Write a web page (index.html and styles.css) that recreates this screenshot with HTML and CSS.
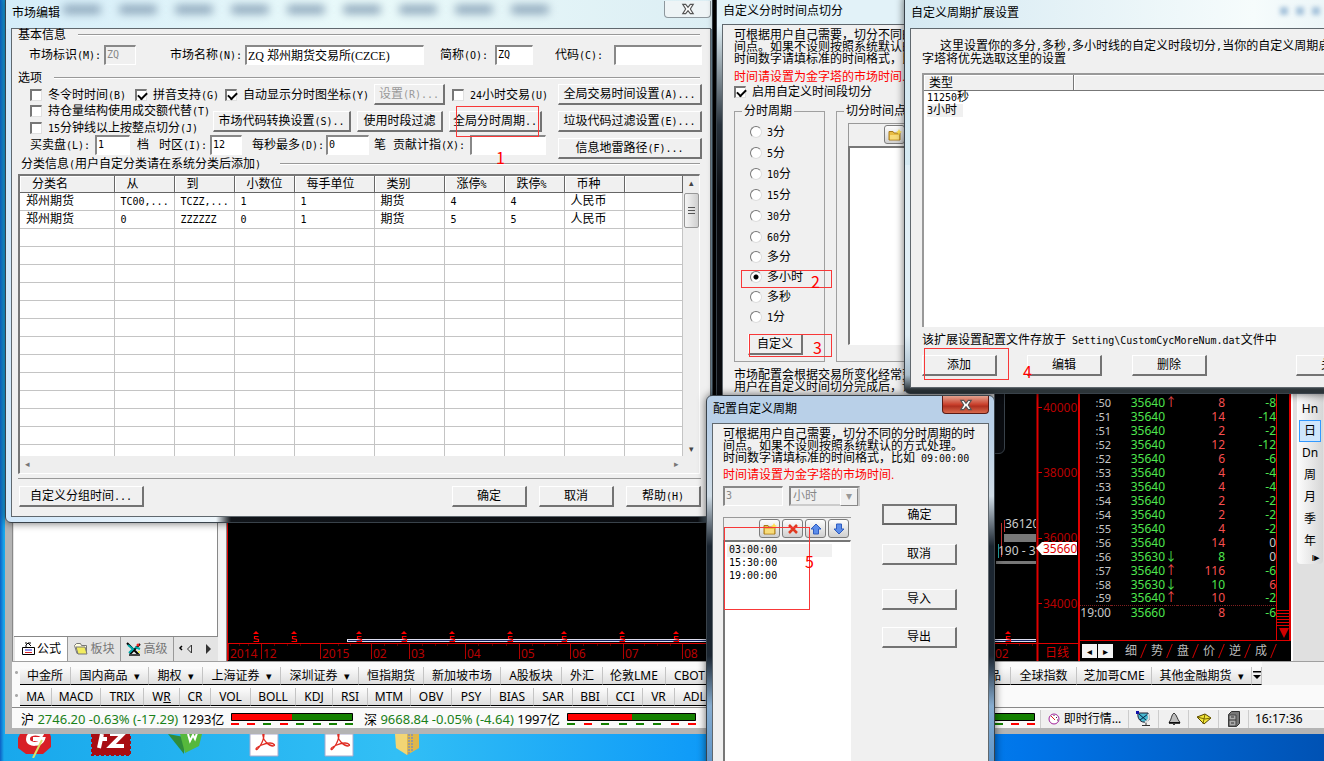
FILE: index.html
```html
<!DOCTYPE html>
<html lang="zh-CN">
<head>
<meta charset="utf-8">
<title>市场编辑</title>
<link rel="stylesheet" href="styles.css">
</head>
<body>
<svg class="defs" width="0" height="0" aria-hidden="true">
  <defs>
    <symbol id="folder" viewBox="0 0 14 12"><path d="M1 2.500h4l1 1.500h6v7H1z" fill="#e9bd45" stroke="#a87a1c"/><path d="M2 6h9v4.500H2z" fill="#f8dc7a"/><path d="M11 0l1 2 2 1-2 1-1 2-1-2-2-1 2-1z" fill="#ffe14d"/></symbol>
    <symbol id="cross" viewBox="0 0 12 12"><path d="M2 2l8 8M10 2l-8 8" stroke="#e03a20" stroke-width="2.500"/></symbol>
    <symbol id="up" viewBox="0 0 12 12"><path d="M6 1l5 5H8.500v5h-5V6H1z" fill="#5c8dea" stroke="#2f5cc0"/></symbol>
    <symbol id="down" viewBox="0 0 12 12"><path d="M6 11l5-5H8.500V1h-5v5H1z" fill="#5c8dea" stroke="#2f5cc0"/></symbol>
    <symbol id="bill" viewBox="0 0 8 12"><path d="M4 0l3 3H1z" fill="#f00"/><path d="M6.500 5.500h-4v2l4 1v2h-5" fill="none" stroke="#f00" stroke-width="1.200"/></symbol>
    <symbol id="pdf" viewBox="0 0 30 24"><path d="M1 0h28v22H1z" fill="#fff" stroke="#aac"/><path d="M14 0c-1 6 6 12 10 12 3 0 1-3-3-3-5 0-14 4-14 6 0 3 8-6 8-15" fill="none" stroke="#e02a20" stroke-width="1.300"/></symbol>
    <symbol id="xmark" viewBox="0 0 12 10"><path d="M1.500 1h2.500l2 2.500L8 1h2.500L8 5l2.500 4H8L6 6.500 4 9H1.500L4 5z" fill="#fff" stroke="#555"/></symbol>
  </defs>
</svg>

<main class="desktop">
  <div class="shortcuts" aria-hidden="true">
    <svg class="s1" width="36" height="24"><path d="M3 0h30l1 3v10l-8 7H9l-8-6V4z" fill="#d81f26"/><path d="M26 2c-6-4-15-3-15 3 0 7 13 6 15 0H16" fill="none" stroke="#fff" stroke-width="4"/><path d="M16 24l9-18" stroke="#d9e36a" stroke-width="2"/></svg>
    <svg class="s2" width="40" height="24"><path d="M1 0h38v21H1z" fill="#a80d12" stroke="#a80d12" stroke-width="2" stroke-dasharray="3 2"/><path d="M8 14L11 0M10 5h6M19 0h13L20 12h13" fill="none" stroke="#fff" stroke-width="4"/></svg>
    <svg class="s3" width="36" height="22"><path d="M0 0l16 3v17z" fill="#2f8c3b"/><path d="M12 0h22l-3 12-14 7z" fill="#56b83c"/><path d="M20 0l2 7 3-6 2 4 2-6" fill="none" stroke="#fff" stroke-width="2"/></svg>
    <svg class="s4" width="30" height="24"><use href="#pdf"/></svg>
    <svg class="s5" width="30" height="24"><use href="#pdf"/></svg>
    <svg class="s6" width="28" height="24"><path d="M1 0h12v21L2 14z" fill="#f2d574"/><path d="M13 0h12v14l-12 7z" fill="#dfb74a"/><path d="M15 0v20M18 0v18" stroke="#999" stroke-width="2" stroke-dasharray="2 1"/></svg>
  </div>

  <section class="app" aria-label="行情主窗口">
    <div class="work">
      <div class="side">
        <div class="side-list"></div>
        <nav class="side-tabs">
          <button class="on"><svg width="15" height="14"><path d="M1.500 5.500h12v7h-12zM5 5V3l2-2h3M7 1l3 3M4 1h2" fill="#fff" stroke="#000"/><path d="M4 8h7" stroke="#22c"/><path d="M4 10.500h7" stroke="#d22"/></svg>公式</button>
          <button><svg width="16" height="14"><path d="M1.500 3.500l2-2h4l1 2h5v8H4z" fill="#fffde0" stroke="#777"/><path d="M3 5h9l2 7H5z" fill="#f2ec60" stroke="#777"/></svg>板块</button>
          <button><svg width="16" height="15"><path d="M1 1l12 12M14 2L4 12" stroke="#000" stroke-width="2"/><path d="M2 3l5 4-4 4M9 5l5 2" stroke="#0aa" fill="none" stroke-width="2"/><path d="M3 13h11" stroke="#444" stroke-width="2"/><circle cx="12" cy="3" r="1.500" fill="#e22"/><circle cx="13" cy="10" r="1" fill="#ee2"/></svg>高级</button>
          <span class="side-arrows"><svg width="34" height="10"><path d="M4 2L2 4l2 2" stroke="#000" fill="none" stroke-width="1.500"/><path d="M13.500 1v8l-4-4z" fill="none" stroke="#333"/><path d="M28 0v10l5-5z" fill="#333"/></svg></span>
        </nav>
      </div>
      <div class="chart">
        <svg width="852" height="272" viewBox="226 390 852 272">
          <g fill="none" stroke="#e00000">
            <path d="M227 390v272M1037.500 390v272" stroke-width="2"/>
            <path d="M226 644.500h852"/>
            <path d="M1037 408.500h5M1037 473.500h5M1037 539.500h5M1037 604.500h5"/>
            <path stroke="#b00000" d="M228.500 645v16M261.500 645v15M320.500 645v15M371.500 645v15M409.500 645v15M465.500 645v15M519.500 645v15M570.500 645v15M623.500 645v15M682.500 645v15M239 646h1M248 646h1M274 646h1M287 646h1M300 646h1M338 646h1M350 646h1M384 646h1M397 646h1M422 646h1M435 646h1M447 646h1M478 646h1M492 646h1M506 646h1M532 646h1M544 646h1M557 646h1M583 646h1M597 646h1M610 646h1M644 646h1M657 646h1M670 646h1M1006 646h1M1019 646h1M1032 646h1"/>
          </g>
          <path d="M347 641.500h689" stroke="#dde" stroke-width="3"/><path d="M348 641.500h688" stroke="#102060"/>
          <g>
            <use href="#bill" x="252" y="632" width="8" height="12"/><use href="#bill" x="290" y="632" width="8" height="12"/><use href="#bill" x="355" y="632" width="8" height="12"/><use href="#bill" x="400" y="632" width="8" height="12"/><use href="#bill" x="448" y="632" width="8" height="12"/><use href="#bill" x="506" y="632" width="8" height="12"/><use href="#bill" x="560" y="632" width="8" height="12"/><use href="#bill" x="618" y="632" width="8" height="12"/><use href="#bill" x="672" y="632" width="8" height="12"/><use href="#bill" x="1004" y="632" width="8" height="12"/>
          </g>
          <g class="axis">
            <text x="230" y="659">2014</text><text x="263" y="659">12</text><text x="322" y="659">2015</text><text x="373" y="659">02</text><text x="411" y="659">03</text><text x="467" y="659">04</text><text x="521" y="659">05</text><text x="572" y="659">06</text><text x="625" y="659">07</text><text x="684" y="659">08</text><text x="995" y="659">02</text>
            <text x="1043" y="413">40000</text><text x="1043" y="478">38000</text><text x="1043" y="543">36000</text><text x="1043" y="609">34000</text>
          </g>
          <text class="day" x="1045" y="658">日线</text>
          <path d="M1036 549l6-6h35v13h-35z" fill="#fff"/><text class="last" x="1043" y="554">35660</text>
          <path d="M1004 535h32v8h-32z" fill="#777"/><path d="M996 562h40v3h-40z" fill="#777"/>
          <path d="M1001.500 524v34M1004.500 521v12" stroke="#c03030"/><path d="M998.500 545v14" stroke="#2aa"/>
          <svg x="990" y="515" width="46" height="45" viewBox="990 515 46 45"><text class="tip" x="1005" y="529">36120</text><text class="tip" x="998" y="556">190 - 3</text></svg>
        </svg>
      </div>
      <div class="ticks">
        <div class="tick-main">
          <table>
            <tr><td>:50<td class="g">35640<td class="r">↑<td class="r">8<td class="g">-8
            <tr><td>:51<td class="g">35640<td><td class="r">14<td class="g">-14
            <tr><td>:51<td class="g">35640<td><td class="r">2<td class="g">-2
            <tr><td>:52<td class="g">35640<td><td class="r">12<td class="g">-12
            <tr><td>:52<td class="g">35640<td><td class="r">6<td class="g">-6
            <tr><td>:53<td class="g">35640<td><td class="r">4<td class="g">-4
            <tr><td>:53<td class="g">35640<td><td class="r">4<td class="g">-4
            <tr><td>:54<td class="g">35640<td><td class="r">2<td class="g">-2
            <tr><td>:54<td class="g">35640<td><td class="r">2<td class="g">-2
            <tr><td>:55<td class="g">35640<td><td class="r">4<td class="g">-2
            <tr><td>:56<td class="g">35640<td><td class="r">14<td>0
            <tr><td>:56<td class="g">35630<td class="g">↓<td class="g">8<td>0
            <tr><td>:57<td class="g">35640<td class="r">↑<td class="r">116<td class="g">-6
            <tr><td>:58<td class="g">35630<td class="g">↓<td class="g">10<td class="r">6
            <tr><td>:59<td class="g">35640<td class="r">↑<td class="r">10<td class="g">-2
            <tr class="now"><td>19:00<td class="g">35660<td><td class="r">8<td class="g">-6
          </table>
          <div class="tick-scroll"><svg width="14" height="30"><path d="M0 .5h15M0 3.500h15M0 6.500h15M0 9.500h15M0 12.500h15M0 15.500h15" stroke="#e00000"/><path d="M2 18h10l-5 10z" fill="#d00000"/></svg></div>
        </div>
        <nav class="tick-tabs">
          <button class="step" aria-label="上一页">◂</button><button class="step" aria-label="下一页">▸</button>
          <a href="#">细</a><a href="#">势</a><a href="#">盘</a><a href="#">价</a><a href="#">逆</a><a href="#">成</a>
        </nav>
      </div>
      <nav class="periods">
        <div>
          <button>Hn</button><button class="on">日</button><button>Dn</button><button>周</button><button>月</button><button>季</button><button>年</button>
          <span>ı▸</span>
        </div>
      </nav>
    </div>
    <nav class="bar markets">
      <button>中金所</button><button>国内商品<b>▾</b></button><button>期权<b>▾</b></button><button>上海证券<b>▾</b></button><button>深圳证券<b>▾</b></button><button>恒指期货</button><button>新加坡市场</button><button>A股板块</button><button>外汇</button><button>伦敦LME</button><button>CBOT</button><button class="end">商品</button><button>全球指数</button><button>芝加哥CME</button><button>其他金融期货<b>▾</b></button><button class="more" aria-label="更多"><svg width="8" height="10"><path d="M0 1h8v1.500H0zM0 5h8L4 9z"/></svg></button>
    </nav>
    <nav class="bar indicators">
      <button>MA</button><button>MACD</button><button>TRIX</button><button>W<u>R</u></button><button>CR</button><button>VOL</button><button>BOLL</button><button>KDJ</button><button>RSI</button><button>MTM</button><button>OBV</button><button>PSY</button><button>BIAS</button><button>SAR</button><button>BBI</button><button>CCI</button><button>VR</button><button>ADL</button>
    </nav>
    <footer class="status">
      <span>沪 <em>2746.20 -0.63% (-17.29)</em> 1293亿</span>
      <svg class="meter" width="122" height="13"><path d="M.5.5h121v7H.5z" fill="#138000" stroke="#000"/><path d="M1 1h60v6H1z" fill="#f00"/><path d="M0 11h8M16 11h8M49 11h8" stroke="#f00" stroke-width="2"/><path d="M32 11h8M65 11h8M82 11h8M98 11h8M114 11h8" stroke="#138000" stroke-width="2"/></svg>
      <span>深 <em>9668.84 -0.05% (-4.64)</em> 1997亿</span>
      <svg class="meter" width="129" height="13"><path d="M.5.5h128v7H.5z" fill="#138000" stroke="#000"/><path d="M1 1h64v6H1z" fill="#f00"/><path d="M17 11h8M104 11h8M121 11h8" stroke="#f00" stroke-width="2"/><path d="M0 11h8M34 11h8M52 11h8M69 11h8M86 11h8" stroke="#138000" stroke-width="2"/></svg>
      <svg class="meter last-meter" width="60" height="13"><path d="M.5.5h59v7H.5z" fill="#138000" stroke="#000"/><path d="M20 11h8" stroke="#138000" stroke-width="2"/><path d="M36 11h8M52 11h8" stroke="#f00" stroke-width="2"/></svg>
      <span class="cell live"><svg width="12" height="12"><circle cx="6" cy="6" r="5" fill="#fff" stroke="#a0209a"/><path d="M3 3l4 4" stroke="#d22" fill="none"/><path d="M6 2v1M9 4L8 5M10 7H9" stroke="#333"/></svg>即时行情…</span>
      <span class="cell"><svg width="16" height="16"><path d="M2 2c-1 6 3 10 8 9 4-1 4-5 2-9z" fill="#48b8d0" stroke="#223"/><path d="M3 3l8 7M12 3L4 9" stroke="#024"/><path d="M12 3c2 3 1 7-3 8" stroke="#ddd" fill="none" stroke-width="2"/><path d="M6 14.500h8M10 12v2" stroke="#333"/><path d="M0 0h3v3H0z" fill="#11a"/></svg></span>
      <span class="cell"><svg width="14" height="14"><path d="M7 1c-3 2-2 6-5 9.500h11C10 7 10 3 7 1z" fill="#bbb" stroke="#333"/><path d="M2 11h11M7 12v1" stroke="#000" stroke-width="1.500"/></svg></span>
      <span class="cell"><svg width="16" height="14"><path d="M1 5l8-3 6 4-7 6z" fill="#f2e63a" stroke="#554400"/><path d="M1 5l8 2 6-1M9 2L7 12" fill="none" stroke="#7a6a00"/></svg></span>
      <span class="cell"><svg width="14" height="16"><path d="M1.500 3.500l3-3h8v12l-3 3h-8z" fill="#777" stroke="#333"/><path d="M2 4h7v11H2z" fill="#aaa" stroke="#444"/><path d="M2 9h7M4 6h3M4 12h3" stroke="#333"/></svg></span>
      <span class="cell clock">16:17:36</span>
    </footer>
  </section>

  <section class="win market">
    <header><h1>市场编辑</h1>
      <div class="haze" aria-hidden="true"><i></i><i></i><i></i><i></i><i></i><i></i><i></i><i></i><i></i></div>
      <button class="x" aria-label="关闭"><svg width="14" height="12"><use href="#xmark"/></svg></button></header>
    <form class="client">
      <h2 class="rule">基本信息</h2>
      <div class="row names">
        <label for="mid">市场标识<small>(M):</small></label><input id="mid" class="w32" value="ZQ" disabled>
        <label for="mname">市场名称<small>(N):</small></label><input id="mname" class="w179" value="ZQ 郑州期货交易所(CZCE)">
        <label for="mshort">简称<small>(O):</small></label><input id="mshort" class="w38" value="ZQ">
        <label for="mcode">代码<small>(C):</small></label><input id="mcode" class="w88">
      </div>
      <h2 class="rule opt">选项</h2>
      <div class="options">
        <div class="opt-left">
          <div class="row checks">
            <label><input type="checkbox"><span>冬令时时间<small>(B)</small></span></label>
            <label><input type="checkbox" checked><span>拼音支持<small>(G)</small></span></label>
            <label><input type="checkbox" checked><span>自动显示分时图坐标<small>(Y)</small></span></label>
            <button type="button" class="btn w71" disabled>设置<small>(R)...</small></button>
            <label><input type="checkbox"><span><small>24</small>小时交易<small>(U)</small></span></label>
          </div>
          <div class="row mid">
            <div class="stack">
              <label><input type="checkbox"><span>持仓量结构使用成交额代替<small>(T)</small></span></label>
              <label><input type="checkbox"><span><small>15</small>分钟线以上按整点切分<small>(J)</small></span></label>
            </div>
            <button type="button" class="btn w138">市场代码转换设置<small>(S)..</small></button>
            <button type="button" class="btn w86">使用时段过滤</button>
            <button type="button" class="btn w93">全局分时周期<small>..</small></button>
          </div>
          <div class="row limits">
            <label for="lv">买卖盘<small>(L):</small></label><input id="lv" class="w35" value="1"><span>档</span>
            <label for="tz">时区<small>(I):</small></label><input id="tz" class="w32" value="12">
            <label for="ps">每秒最多<small>(D):</small></label><input id="ps" class="w43" value="0"><span>笔</span>
            <label for="cx">贡献计指<small>(X):</small></label><input id="cx" class="w76">
          </div>
        </div>
        <div class="opt-right">
          <button type="button" class="btn">全局交易时间设置<small>(A)...</small></button>
          <button type="button" class="btn">垃圾代码过滤设置<small>(E)...</small></button>
          <button type="button" class="btn">信息地雷路径<small>(F)...</small></button>
        </div>
      </div>
      <h2 class="rule cat">分类信息<small>(</small>用户自定分类请在系统分类后添加<small>)</small></h2>
      <div class="grid">
        <div class="grid-body">
          <table>
            <colgroup><col class="c95"><col class="c60"><col class="c60"><col class="c60"><col class="c80"><col class="c70"><col class="c60"><col class="c60"><col class="c60"><col></colgroup>
            <thead><tr><th>分类名<th>从<th>到<th>小数位<th>每手单位<th>类别<th>涨停<small>%</small><th>跌停<small>%</small><th>币种<th></thead>
            <tbody>
            <tr><td>郑州期货<td><small>TC00,...</small><td><small>TCZZ,...</small><td><small>1</small><td><small>1</small><td>期货<td><small>4</small><td><small>4</small><td>人民币<td>
            <tr><td>郑州期货<td><small>0</small><td><small>ZZZZZZ</small><td><small>0</small><td><small>1</small><td>期货<td><small>5</small><td><small>5</small><td>人民币<td>
            <tr><td><td><td><td><td><td><td><td><td><td>
            <tr><td><td><td><td><td><td><td><td><td><td>
            <tr><td><td><td><td><td><td><td><td><td><td>
            <tr><td><td><td><td><td><td><td><td><td><td>
            <tr><td><td><td><td><td><td><td><td><td><td>
            <tr><td><td><td><td><td><td><td><td><td><td>
            <tr><td><td><td><td><td><td><td><td><td><td>
            <tr><td><td><td><td><td><td><td><td><td><td>
            <tr><td><td><td><td><td><td><td><td><td><td>
            <tr><td><td><td><td><td><td><td><td><td><td>
            <tr><td><td><td><td><td><td><td><td><td><td>
            <tr><td><td><td><td><td><td><td><td><td><td>
            <tr><td><td><td><td><td><td><td><td><td><td>
            </tbody>
          </table>
        </div>
        <div class="vbar"><span>▴</span><i></i><span>▾</span></div>
        <div class="hbar"><span>◂</span><span>▸</span></div>
      </div>
      <div class="foot">
        <button type="button" class="btn w125">自定义分组时间<small>...</small></button>
        <button type="button" class="btn w75 push">确定</button>
        <button type="button" class="btn w75">取消</button>
        <button type="button" class="btn w75">帮助<small>(H)</small></button>
      </div>
    </form>
  </section>

  <section class="win split">
    <header><h1>自定义分时时间点切分</h1></header>
    <form class="client">
      <p>可根据用户自己需要，切分不同的分时周期的时<br>间点。如果不设则按照系统默认的方式处理。<br>时间数字请填标准的时间格式，比如</p>
      <p class="warn">时间请设置为金字塔的市场时间.</p>
      <label class="enable"><input type="checkbox" checked>启用自定义时间段切分</label>
      <div class="boxes">
        <fieldset class="cycle">
          <legend>分时周期</legend>
          <label><input type="radio" name="c"><span><small>3</small>分</span></label>
          <label><input type="radio" name="c"><span><small>5</small>分</span></label>
          <label><input type="radio" name="c"><span><small>10</small>分</span></label>
          <label><input type="radio" name="c"><span><small>15</small>分</span></label>
          <label><input type="radio" name="c"><span><small>30</small>分</span></label>
          <label><input type="radio" name="c"><span><small>60</small>分</span></label>
          <label><input type="radio" name="c">多分</label>
          <label><input type="radio" name="c" checked>多小时</label>
          <label><input type="radio" name="c">多秒</label>
          <label><input type="radio" name="c"><span><small>1</small>分</span></label>
          <button type="button" class="btn">自定义</button>
        </fieldset>
        <fieldset class="points">
          <legend>切分时间点</legend>
          <div class="tools"><button type="button" class="tool" aria-label="新建"><svg width="14" height="12"><use href="#folder"/></svg></button></div>
          <div class="list"></div>
        </fieldset>
      </div>
      <p class="after">市场配置会根据交易所变化经常变动<br>用户在自定义时间切分完成后，请备份</p>
    </form>
  </section>

  <section class="win extend">
    <header><h1>自定义周期扩展设置</h1><div class="dots" aria-hidden="true"><i></i><i></i><i></i></div></header>
    <form class="client">
      <p>这里设置你的多分<small>,</small>多秒<small>,</small>多小时线的自定义时段切分<small>,</small>当你的自定义周期启用时<br>字塔将优先选取这里的设置</p>
      <table>
        <thead><tr><th class="type">类型<th></thead>
        <tbody><tr><td><small>11250</small>秒<td><tr><td><mark><small>3</small>小时</mark><td></tbody>
      </table>
      <p class="path">该扩展设置配置文件存放于<small> Setting\CustomCycMoreNum.dat</small>文件中</p>
      <div class="acts">
        <button type="button" class="btn w75">添加</button><button type="button" class="btn w75">编辑</button><button type="button" class="btn w75">删除</button><button type="button" class="btn w75">关闭</button>
      </div>
    </form>
  </section>

  <section class="win config">
    <header><h1>配置自定义周期</h1><button class="x red" aria-label="关闭"><svg width="14" height="12"><use href="#xmark"/></svg></button></header>
    <form class="client">
      <p>可根据用户自己需要，切分不同的分时周期的时<br>间点。如果不设则按照系统默认的方式处理。<br>时间数字请填标准的时间格式，比如<small> 09:00:00</small></p>
      <p class="warn">时间请设置为金字塔的市场时间.</p>
      <div class="cfg">
        <div class="cfg-left">
          <div class="unit"><input value="3" aria-label="数量" disabled><div class="pick"><select aria-label="单位" disabled><option>小时</option></select></div></div>
          <div class="tools">
            <button type="button" class="tool" aria-label="新建"><svg width="14" height="12"><use href="#folder"/></svg></button>
            <button type="button" class="tool" aria-label="删除"><svg width="12" height="12"><use href="#cross"/></svg></button>
            <button type="button" class="tool" aria-label="上移"><svg width="12" height="12"><use href="#up"/></svg></button>
            <button type="button" class="tool" aria-label="下移"><svg width="12" height="12"><use href="#down"/></svg></button>
          </div>
          <ul class="list"><li class="on"><small>03:00:00</small></li><li><small>15:30:00</small></li><li><small>19:00:00</small></li></ul>
        </div>
        <div class="cfg-right">
          <button type="button" class="btn w75 main">确定</button><button type="button" class="btn w75">取消</button><button type="button" class="btn w75 import">导入</button><button type="button" class="btn w75">导出</button>
        </div>
      </div>
    </form>
  </section>

  <div class="note n1"></div><b class="num m1">1</b>
  <div class="note n2"></div><b class="num m2">2</b>
  <div class="note n3"></div><b class="num m3">3</b>
  <div class="note n4"></div><b class="num m4">4</b>
  <div class="note n5"></div><b class="num m5">5</b>
</main>
</body>
</html>
```
FILE: styles.css
```css
* { box-sizing: border-box; }
body {
  margin: 0;
  font: 12px/14px "Liberation Sans", "Noto Sans CJK SC", sans-serif;
  color: #000;
}
h1, h2, p, ul, fieldset { margin: 0; padding: 0; font-size: 12px; font-weight: 400; }
ul { list-style: none; }
button, input, select { font: inherit; color: inherit; margin: 0; padding: 0; }
small { font: 10px "DejaVu Sans Mono", monospace; white-space: pre; }
.defs { position: absolute; }

.desktop {
  position: relative;
  height: 100vh;
  overflow: hidden;
  background: linear-gradient(90deg, #0d5fc4 0, #18a8ec 4px, #32bff5 30%, #109cf8 52%, #0076ea 77%, #0052b4 100%);
}

/* desktop shortcuts */
.shortcuts svg { position: absolute; top: 734px; }
.shortcuts .s1 { left: 17px; }
.shortcuts .s2 { left: 91px; }
.shortcuts .s3 { left: 168px; }
.shortcuts .s4 { left: 249px; }
.shortcuts .s5 { left: 324px; }
.shortcuts .s6 { left: 394px; }

/* main application */
.app {
  position: absolute;
  inset: 0 0 auto 5px;
  height: 734px;
  display: flex;
  flex-direction: column;
  background: #f2f2f2;
  border: solid #b4b4b4;
  border-width: 0 0 6px 7px;
  font-family: "Noto Sans", "Noto Sans CJK SC", sans-serif;
}
.work { flex: 1; min-height: 0; display: flex; border-bottom: 1px solid #a0a0a0; }
.side { width: 206px; display: flex; flex-direction: column; border-left: 1px solid #888; background: #e4e4e4; }
.side-list { flex: 1; background: #fff; border: solid #888; border-width: 0 1px 1px 0; margin-left: 1px; }
.side-tabs { height: 24px; display: flex; align-items: center; padding-left: 2px; }
.side-tabs button { width: 53px; height: 24px; border: 0; border-right: 1px solid #999; background: none; color: #777; display: flex; align-items: center; justify-content: center; gap: 1px; font-size: 12px; white-space: nowrap; }
.side-tabs .on { background: #fff; color: #000; }
.side-arrows { padding-left: 4px; line-height: 10px; }
.chart { flex: 1; min-width: 0; margin-left: 8px; border-left: 1px solid #888; background: #000; display: flex; align-items: flex-end; justify-content: flex-end; overflow: hidden; }
.chart svg { flex: none; display: block; }
.axis { fill: #b80000; font-size: 12px; }
.day { fill: #d00000; font-size: 12px; }
.last { fill: #e00000; }
.tip { fill: #ccc; }
.ticks { width: 213px; background: #000; color: #c8c8c8; border-left: 2px solid #e00000; display: flex; flex-direction: column; }
.tick-main { flex: 1; min-height: 0; display: flex; align-items: flex-end; border-bottom: 1px solid #e00000; }
.tick-main table { width: 196px; table-layout: fixed; border-collapse: collapse; margin-bottom: 21px; }
.tick-main td { height: 14px; line-height: 13px; padding: 0; text-align: right; white-space: nowrap; }
.tick-main td:first-child { width: 31px; font-size: 11px; }
.tick-main td:nth-child(2) { width: 54px; }
.tick-main td:nth-child(3) { width: 12px; }
.tick-main td:nth-child(4) { width: 48px; }
.tick-main .g { color: #4ee64e; }
.tick-main .r { color: #f85050; }
.tick-main .now td { border-top: 1px dotted #802020; }
.tick-main .now td:first-child { font-size: 12px; }
.tick-scroll { width: 15px; margin-left: auto; align-self: stretch; border: solid #e00000; border-width: 0 2px 0 1px; display: flex; align-items: flex-end; overflow: hidden; }
.tick-tabs { height: 20px; display: flex; align-items: center; color: #bbb; padding-left: 2px; }
.tick-tabs .step { width: 15px; height: 14px; line-height: 12px; font-size: 10px; border: 0; background: #f4f4f4; color: #000; margin-right: 1px; }
.tick-tabs a { width: 26px; color: #bbb; text-decoration: none; text-align: center; position: relative; height: 14px; line-height: 14px; }
.tick-tabs a:first-of-type { margin-left: 4px; }
.tick-tabs a::after { content: ""; position: absolute; right: 0; top: 0; height: 14px; border-right: 1px solid #d00000; transform: skewX(-22deg); }
.periods { width: 33px; padding-left: 4px; background: #e0e0e0; border-left: 2px solid #fff; }
.periods div { width: 26px; padding-top: 398px; background: linear-gradient(90deg, #fdfdfd, #d6d6d6); border-radius: 0 0 4px 4px; display: flex; flex-direction: column; align-items: center; }
.periods button { width: 22px; height: 22px; border: 0; background: none; font-size: 12px; }
.periods .on { background: #cfe6fc; border: 1px solid #3399ff; }
.periods span { height: 12px; line-height: 10px; font-size: 11px; padding-left: 12px; }

.bar { display: grid; padding-left: 8px; background: radial-gradient(circle, #aaa 1px, transparent 2px) 2px 8px / 5px 5px no-repeat, #fafafa; font-size: 12px; }
.bar button { border: 0; border-right: 1px solid #c4c4c4; border-bottom: 1px solid #000; background: linear-gradient(#fcfcfc, #dedede); white-space: nowrap; overflow: hidden; height: 18px; line-height: 17px; }
.bar b { font-weight: 400; font-size: 11px; padding-left: 6px; }
.markets { height: 23px; padding-top: 5px; margin-right: 62px; grid-template-columns: 51px 78px 54px 78px 78px 65px 77px 61px 41px 63px 48px 1fr 66px 75px 100px 10px; }
.markets .end { text-align: right; padding-right: 9px; }
.indicators { height: 22px; padding-top: 3px; grid-template-columns: 32px 49px 43px 36px 31px 40px 45px 37px 35px 43px 41px 39px 43px 39px 35px 35px 32px 40px; }
.status { height: 21px; border-top: 1px solid #888; display: flex; align-items: center; padding: 2px 0 0 9px; background: #fafafa; white-space: nowrap; overflow: hidden; font-size: 13px; }
.status > span:not(.cell) { width: 210px; }
.status > span ~ span:not(.cell) { width: 203px; }
.status em { font-style: normal; color: #188018; }
.meter { margin-right: 11px; flex: none; }
.last-meter { margin: 0 5px 0 auto; }
.cell { width: 30px; height: 18px; display: flex; align-items: center; justify-content: center; border-left: 1px solid #ccc; background: #f0f0f0; font-size: 12px; }
.live { width: 88px; gap: 4px; }
.clock { width: 76px; justify-content: flex-start; padding-left: 6px; }

/* dialogs */
.win {
  position: absolute;
  display: flex;
  flex-direction: column;
  padding: 0 5px 5px;
  border: 1px solid #39424a;
  border-radius: 6px;
  background: linear-gradient(90deg, #dff1fa, #f3fbfc 50%, #c8dcea);
  box-shadow: 0 0 8px rgba(0, 0, 0, .6);
}
.win > header { display: flex; align-items: center; position: relative; }
.win h1 { flex: 1; padding: 0 0 3px 1px; white-space: nowrap; }
.client { flex: 1; min-height: 0; background: #f0f0f0; border: 1px solid #60686e; display: block; position: relative; }
.x { align-self: flex-start; width: 47px; height: 17px; border: 1px solid #8d979d; border-top: 0; border-radius: 0 0 4px 4px; background: #eef4f6; display: flex; align-items: center; justify-content: center; }
.x.red { background: linear-gradient(#e3a28f, #c9402c 50%, #b03020 60%, #d8694c); border-color: #5a1a14; height: 18px; }

.btn { height: 21px; border: solid; border-color: #fff #737373 #737373 #fff; border-width: 1px 2px 2px 1px; background: #f0f0f0; white-space: nowrap; line-height: 18px; text-align: center; }
.btn:disabled { color: #999; }
.w71 { width: 71px; } .w75 { width: 75px; } .w86 { width: 86px; } .w93 { width: 93px; } .w125 { width: 125px; } .w138 { width: 138px; }
.w32 { width: 32px; } .w35 { width: 35px; } .w38 { width: 38px; } .w43 { width: 43px; } .w76 { width: 76px; } .w88 { width: 88px; } .w179 { width: 179px; }

input:not([type]) { height: 20px; border: solid; border-width: 2px 1px 1px 2px; border-color: #888 #fff #fff #888; background: #fff; padding: 0 1px 2px; font: 10px "DejaVu Sans Mono", "Noto Sans CJK SC", monospace; }
#mname { font: 12px "Liberation Serif", "Noto Sans CJK SC", serif; }
input:not([type]):disabled { background: #f0f0f0; color: #888; }
input[type="checkbox"] { appearance: none; flex: none; width: 12px; height: 12px; border: solid; border-width: 2px 1px 1px 2px; border-color: #777 #e0e0e0 #e0e0e0 #777; background: #fff; }
input[type="checkbox"]:checked::before { content: ""; display: block; width: 7px; height: 4px; margin: 1px; border: solid #000; border-width: 0 0 2px 2px; transform: rotate(-45deg); }
input[type="radio"] { appearance: none; flex: none; width: 12px; height: 12px; border-radius: 50%; border: 1px solid; border-color: #777 #ddd #ddd #777; background: #fff; }
input[type="radio"]:checked { background: radial-gradient(circle, #000 2px, #fff 3px); }
label { white-space: nowrap; }
label:has(> input) { display: flex; align-items: center; gap: 6px; }
.warn { color: #f00; }

/* market editor */
.market { left: 5px; top: -6px; width: 708px; height: 529px; padding: 6px 1px 5px 5px; background: linear-gradient(90deg, #d5edf9, #eafafa 50%, #dceef4) top / 100% 34px no-repeat, linear-gradient(90deg, #d2e8fa 0, #eef6fb 210px, #11151a 225px, #0a0c10 98%, #6a8494); }
.market > header { height: 27px; }
.market .haze { position: absolute; left: 52px; top: 4px; display: flex; gap: 18px; }
.haze i { width: 38px; height: 9px; background: #8fa8bc; filter: blur(4px); border-radius: 4px; }
.market .client { padding-left: 6px; }
.rule { display: flex; align-items: center; height: 12px; gap: 12px; padding-right: 10px; white-space: nowrap; }
.rule::after { content: ""; flex: 1; border-top: 1px solid #999; border-bottom: 1px solid #fff; }
.row { display: grid; align-items: center; }
.names { grid-template-columns: 75px 66px 75px 195px 55px 60px 59px 88px; padding-left: 11px; margin-top: 4px; height: 20px; }
.opt { margin-top: 7px; }
.options { display: flex; padding-left: 12px; }
.opt-left { width: 528px; }
.opt-right { width: 144px; display: grid; gap: 6px; }
.checks { height: 21px; grid-template-columns: 105px 90px 149px 78px 106px; }
.row.mid { display: flex; height: 30px; align-items: flex-end; padding-bottom: 3px; gap: 6px; }
.stack { width: 177px; align-self: flex-start; margin-top: -2px; display: grid; gap: 1px; }
.stack label { height: 16px; }
.limits { height: 20px; grid-template-columns: 65px 42px 22px 51px 42px 74px 48px 19px 77px 76px; }
.cat { height: 14px; padding-left: 3px; margin-top: -2px; gap: 0; }
.cat::after { margin-left: 19px; }
.grid { display: grid; grid-template-columns: 1fr 16px; grid-template-rows: 1fr 17px; margin: 3px 10px 0 0; height: 300px; border: solid; border-width: 2px 1px 1px 2px; border-color: #777 #fff #fff #777; background: #fff; }
.grid-body { overflow: hidden; min-height: 0; }
.grid table { width: 100%; table-layout: fixed; border-collapse: collapse; }
.c60 { width: 60px; } .c70 { width: 70px; } .c80 { width: 80px; } .c95 { width: 94px; }
.grid th { height: 16px; line-height: 14px; padding: 0 0 0 12px; font-weight: 400; text-align: left; background: #f0f0f0; border-right: 1px solid #666; border-bottom: 1px solid #666; box-shadow: inset 1px 1px #fff; }
.grid td { height: 18px; line-height: 13px; padding: 0 0 0 6px; border-right: 1px solid #c4c4c4; border-bottom: 1px solid #c4c4c4; white-space: nowrap; }
.vbar { background: #eee; display: flex; flex-direction: column; align-items: center; font-size: 9px; color: #444; }
.vbar i { width: 15px; height: 35px; border: 1px solid #979797; border-radius: 2px; background: repeating-linear-gradient(#555 0 1px, transparent 1px 3px) center / 7px 8px no-repeat, linear-gradient(90deg, #f5f5f5, #cfcfcf); margin-top: 3px; }
.vbar span:last-child { margin-top: auto; }
.hbar { grid-column: 1 / 3; background: #eee; display: flex; justify-content: space-between; padding: 0 20px 0 5px; color: #777; line-height: 16px; font-size: 9px; }
.foot { display: flex; gap: 12px; margin: 4px 9px 0 0; padding: 7px 0 0 1px; border-top: 1px solid #999; }
.push { margin-left: auto; }

/* time split */
.split { left: 716px; top: -6px; width: 289px; height: 460px; padding: 6px 9px 9px 5px; background: linear-gradient(#e2f2f8 30px, #28323c 130px, #0a0c10 200px); }
.split > header { height: 23px; }
.split .client { padding: 4px 0 0 11px; overflow: hidden; }
.split p, .config p { line-height: 12px; white-space: nowrap; }
.split .warn { margin-top: 6px; }
.enable { margin: 2px 0 0; height: 14px; }
.boxes { display: flex; gap: 11px; margin-top: 6px; }
fieldset { border: 1px solid #a0a0a0; min-width: 0; }
legend { margin-left: -8px; padding: 0 2px; line-height: 13px; white-space: nowrap; }
.cycle { width: 91px; height: 257px; padding: 3px 0 0 15px; }
.cycle label { height: 20px; gap: 5px; }
.cycle label:nth-of-type(-n+6) { height: 21px; }
.cycle .btn { width: 55px; margin: 7px 0 0 -2px; }
.points { width: 150px; height: 257px; padding: 5px 8px 0 11px; }
.points legend { margin-left: -4px; }
.tools { display: flex; gap: 2px; height: 23px; border: 1px solid #999; border-width: 1px 0 0 1px; padding: 1px 0 0 35px; }
.tool { width: 21px; height: 19px; border: 1px solid #7c7c7c; border-radius: 3px; background: linear-gradient(#fdfdfd, #d0d0d0); display: flex; align-items: center; justify-content: center; }
.list { border: solid; border-width: 2px 1px 1px 2px; border-color: #777 #fff #fff #777; background: #fff; }
.points .list { height: 199px; }
.after { margin-top: 7px; }

/* extended settings */
.extend { left: 904px; top: -6px; width: 500px; height: 400px; padding-top: 6px; background: linear-gradient(90deg, #d5e9f2, #f6fcfc 70%, #e2eff4) top / 100% 170px no-repeat, linear-gradient(#e0eef6 340px, #a8bccb 380px, #2c3438 395px); }
.extend > header { height: 27px; }
.dots { position: absolute; left: 370px; top: 6px; display: flex; gap: 8px; }
.dots i { width: 8px; height: 8px; background: #a8c4dc; filter: blur(2px); }
.extend .client { padding: 11px 0 0 11px; white-space: nowrap; }
.extend p { line-height: 13px; text-indent: 18px; }
.extend table { width: 470px; height: 254px; margin-top: 7px; border: solid #999; border-width: 2px 0 0 2px; background: #fff; border-spacing: 0; display: block; }
.extend th { height: 16px; width: 300px; padding: 0 0 0 5px; font-weight: 400; text-align: left; line-height: 14px; background: #f0f0f0; border-right: 1px solid #777; border-bottom: 1px solid #777; box-shadow: inset 1px 1px #fff; }
.extend .type { width: 150px; min-width: 150px; }
.extend td { height: 13px; line-height: 13px; padding: 0 0 0 3px; }
mark { display: inline-block; background: #f0f0f0; padding-right: 6px; }
.extend .path { text-indent: 0; margin-top: 7px; }
.acts { display: flex; gap: 30px; margin-top: 8px; }
.acts :last-child { margin-left: 59px; }

/* custom cycle */
.config { left: 706px; top: 395px; width: 289px; height: 420px; background: linear-gradient(#b9d0e8 30px, #cfdce6 100px, #1b2530 150px 260px, #87add0 310px, #3f83c4); }
.config > header { height: 27px; }
.config h1 { padding-bottom: 1px; }
.config .client { padding: 4px 0 0 10px; display: flex; flex-direction: column; }
.config .warn { margin-top: 5px; }
.cfg { flex: 1; display: flex; gap: 21px; margin-top: 5px; }
.cfg-left { width: 138px; display: flex; flex-direction: column; }
.unit { display: flex; gap: 6px; }
.unit input { width: 60px; }
.pick { position: relative; width: 71px; height: 20px; }
.pick select { appearance: none; width: 100%; height: 100%; padding-left: 2px; border: 2px solid; border-color: #888 #ccc #ccc #888; border-radius: 0; background: #f0f0f0; color: #888; opacity: 1; }
.pick::after { content: "▾"; position: absolute; right: 2px; top: 2px; width: 16px; height: 16px; line-height: 14px; text-align: center; color: #999; border: 1px solid; border-color: #fff #888 #888 #fff; background: #f0f0f0; }
.cfg-left .tools { width: 128px; margin-top: 11px; }
.cfg-left .list { width: 128px; flex: 1; padding: 2px 0 0 2px; }
.list li { height: 13px; line-height: 11px; padding-left: 2px; width: 105px; }
.list .on { background: #f0f0f0; }
.cfg-right { display: flex; flex-direction: column; padding-top: 18px; }
.cfg-right .btn { margin-bottom: 17px; }
.cfg-right .btn:nth-child(2) { margin-bottom: 24px; }
.cfg-right .btn:first-child { border: 2px solid; border-color: #777 #666 #666 #777; margin-bottom: 19px; line-height: 16px; }

/* red call-outs laid over the windows */
.note { position: absolute; border: 1px solid #f83838; }
.n1 { left: 456px; top: 106px; width: 83px; height: 31px; }
.n2 { left: 741px; top: 270px; width: 91px; height: 18px; }
.n3 { left: 749px; top: 334px; width: 83px; height: 23px; }
.n4 { left: 924px; top: 348px; width: 85px; height: 32px; }
.n5 { left: 724px; top: 527px; width: 86px; height: 83px; }
.num { position: absolute; color: #f00; font: 16px/16px "Noto Sans CJK SC", sans-serif; }
.m1 { left: 496px; top: 149px; }
.m2 { left: 811px; top: 273px; }
.m3 { left: 813px; top: 339px; }
.m4 { left: 1023px; top: 363px; }
.m5 { left: 805px; top: 553px; }
```
